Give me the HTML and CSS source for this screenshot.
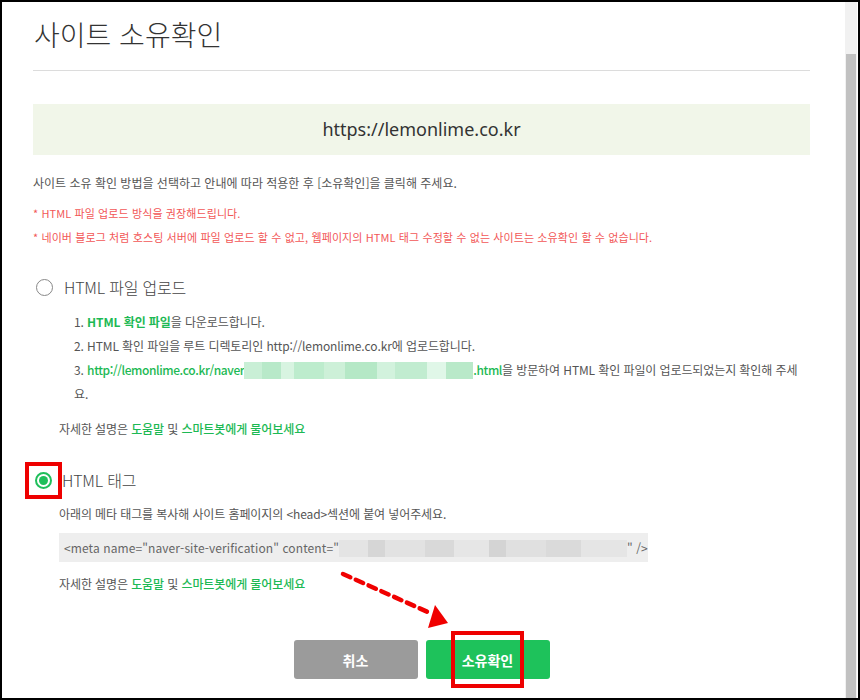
FILE: index.html
```html
<!DOCTYPE html>
<html lang="ko">
<head>
<meta charset="utf-8">
<title>사이트 소유확인</title>
<link rel="stylesheet" href="styles.css">
</head>
<body>
<div class="frame">
  <div class="content">
    <h1 class="title">사이트 소유확인</h1>
    <div class="rule"></div>
    <div class="site-box">https://lemonlime.co.kr</div>
    <p class="desc">사이트 소유 확인 방법을 선택하고 안내에 따라 적용한 후 [소유확인]을 클릭해 주세요.</p>
    <p class="warn warn-first">* HTML 파일 업로드 방식을 권장해드립니다.</p>
    <p class="warn">* 네이버 블로그 처럼 호스팅 서버에 파일 업로드 할 수 없고, 웹페이지의 HTML 태그 수정할 수 없는 사이트는 소유확인 할 수 없습니다.</p>

    <div class="option option-first">
      <span class="radio"></span>
      <span class="option-label">HTML 파일 업로드</span>
    </div>
    <ol class="steps">
      <li>1. <a class="link link-strong">HTML 확인 파일</a>을 다운로드합니다.</li>
      <li>2. HTML 확인 파일을 루트 디렉토리인 http://lemonlime.co.kr에 업로드합니다.</li>
      <li>3. <a class="link link-url">http://lemonlime.co.kr/naver<span class="blur-green"></span>.html</a>을 방문하여 HTML 확인 파일이 업로드되었는지 확인해 주세<br>요.</li>
    </ol>
    <p class="help help-first">자세한 설명은 <a class="link">도움말</a> 및 <a class="link">스마트봇에게 물어보세요</a></p>

    <div class="option option-second">
      <span class="mark-box"><span class="radio radio-on"></span></span>
      <span class="option-label">HTML 태그</span>
    </div>
    <p class="sub">아래의 메타 태그를 복사해 사이트 홈페이지의 &lt;head&gt;섹션에 붙여 넣어주세요.</p>
    <div class="code">&lt;meta name="naver-site-verification" content="<span class="blur-gray"></span>" /&gt;</div>
    <p class="help help-second">자세한 설명은 <a class="link">도움말</a> 및 <a class="link">스마트봇에게 물어보세요</a></p>

    <div class="buttons">
      <button class="btn btn-cancel">취소</button>
      <button class="btn btn-ok"><span class="ok-mark">소유확인</span></button>
    </div>

    <svg class="arrow" width="120" height="70" viewBox="330 565 120 70" aria-hidden="true">
      <line x1="343" y1="574" x2="430" y2="613" stroke="#f00000" stroke-width="4.5" stroke-dasharray="8 6" stroke-linecap="round"/>
      <polygon points="435,605 448,623 428,628" fill="#f00000"/>
    </svg>
  </div>
  <div class="scrollbar"><div class="thumb"></div></div>
</div>
</body>
</html>
```

FILE: styles.css
```css
* { box-sizing: border-box; }
html, body { margin: 0; padding: 0; background: #fff; }
body {
  font-family: "Noto Sans CJK KR", "Noto Sans", sans-serif;
  color: #555;
}
.frame {
  width: 860px;
  height: 700px;
  border: 2px solid #000;
  display: flex;
  overflow: hidden;
  background: #fff;
}
.content {
  position: relative;
  flex: 1;
  padding: 0 35px 0 31px;
}
.title {
  margin: 12px 0 0 1px;
  font-size: 28px;
  font-weight: 300;
  line-height: 40px;
  color: #333;
  letter-spacing: 0;
}
.rule {
  margin-top: 16px;
  height: 1px;
  background: #dcdcdc;
}
.site-box {
  margin-top: 33px;
  height: 51px;
  background: #f1f6e9;
  color: #333;
  font-family: "Noto Sans", sans-serif;
  font-size: 18px;
  line-height: 51px;
  text-align: center;
}
.desc {
  margin: 18px 0 0;
  font-size: 12px;
  line-height: 20px;
  letter-spacing: 0;
  color: #555;
}
.warn {
  margin: 4px 0 0;
  font-size: 11px;
  line-height: 20px;
  letter-spacing: 0.1px;
  color: #f25757;
}
.warn-first { margin-top: 10px; }
.option {
  display: flex;
  align-items: center;
  height: 24px;
}
.option-first { margin: 28px 0 0 3px; }
.option-second { margin: 29px 0 0 3px; }
.radio {
  width: 17px;
  height: 17px;
  border-radius: 50%;
  border: 1.5px solid #888;
  flex: none;
  display: flex;
  align-items: center;
  justify-content: center;
}
.radio-on {
  border: 2px solid #1fbf5b;
}
.radio-on::after {
  content: "";
  width: 9px;
  height: 9px;
  border-radius: 50%;
  background: #1fbf5b;
}
.option-label {
  margin-left: 11px;
  font-size: 16px;
  font-weight: 300;
  color: #444;
  letter-spacing: -0.2px;
}
.mark-box {
  display: flex;
  align-items: center;
  justify-content: center;
  margin: -6px 0 -6px -11px;
  width: 37px;
  height: 37px;
  border: 4px solid #ee0000;
}
.option-second .option-label { margin-left: 0; }
.steps {
  list-style: none;
  margin: 11px 0 0 41px;
  padding: 0;
  font-size: 12px;
  line-height: 24px;
  letter-spacing: -0.1px;
  color: #555;
}
.link {
  color: #1db954;
  font-weight: 500;
  text-decoration: none;
}
.link-strong { font-weight: 700; }
.link-url { letter-spacing: -0.4px; }
.blur-green {
  display: inline-block;
  width: 229px;
  height: 17px;
  vertical-align: -4px;
  background:
    linear-gradient(90deg, #c9efd6 0 8%, #b8e9c9 8% 16%, #d8f4e1 16% 22%, #bdeccd 22% 35%, #cdf0d8 35% 44%, #b5e8c6 44% 58%, #d2f2dd 58% 66%, #c1ecd0 66% 80%, #e0f7e8 80% 88%, #b9e9c9 88% 100%);
}
.help {
  margin: 11px 0 0 26px;
  font-size: 12px;
  line-height: 20px;
  letter-spacing: -0.1px;
  color: #555;
}
.help-first { margin-top: 13px; }
.sub {
  margin: 12px 0 0 26px;
  font-size: 12px;
  line-height: 20px;
  letter-spacing: -0.1px;
  color: #555;
}
.code {
  margin: 9px 0 0 26px;
  width: 589px;
  height: 29px;
  background: #eeeeee;
  padding-left: 5px;
  font-size: 12px;
  line-height: 29px;
  letter-spacing: 0.1px;
  color: #666;
}
.blur-gray {
  display: inline-block;
  width: 288px;
  height: 17px;
  vertical-align: -4px;
  background:
    linear-gradient(90deg, #e4e4e4 0 10%, #d6d6d6 10% 16%, #e2e2e2 16% 30%, #d9d9d9 30% 40%, #e6e6e6 40% 52%, #d4d4d4 52% 58%, #e0e0e0 58% 72%, #dadada 72% 84%, #e5e5e5 84% 100%);
}
.help-second { margin-top: 12px; }
.buttons {
  display: flex;
  justify-content: center;
  gap: 8px;
  margin: 46px 0 0 0;
}
.btn {
  width: 124px;
  height: 39px;
  border: 0;
  border-radius: 3px;
  color: #fff;
  font-family: "Noto Sans CJK KR", sans-serif;
  font-weight: 700;
  font-size: 14px;
  padding: 0;
  display: flex;
  align-items: center;
  justify-content: center;
}
.btn-cancel { background: #9b9b9b; }
.btn-ok { background: #1ec25b; }
.ok-mark {
  display: flex;
  align-items: center;
  justify-content: center;
  width: 73px;
  height: 57px;
  border: 4px solid #ee0000;
}
.arrow {
  position: absolute;
  left: 328px;
  top: 563px;
}
.scrollbar {
  width: 12px;
  flex: none;
  margin-right: 1px;
  background: #f1f1f1;
  padding-top: 52px;
}
.thumb {
  height: 100%;
  background: #c1c1c1;
  margin: 0 1px;
}
```
